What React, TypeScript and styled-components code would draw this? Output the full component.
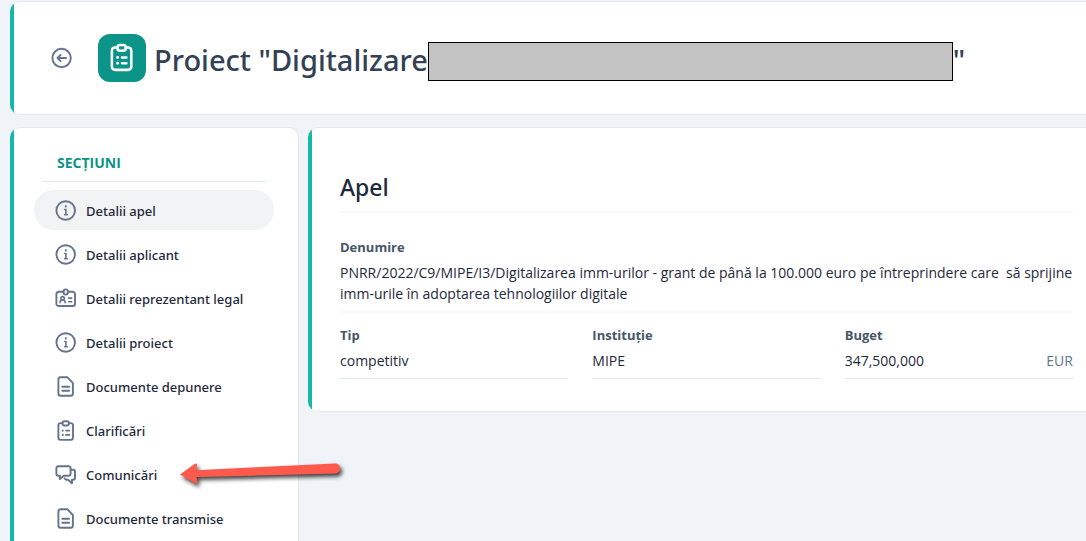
import React from "react";
import styled, { createGlobalStyle } from "styled-components";

const GlobalStyle = createGlobalStyle`
  *, *::before, *::after { box-sizing: border-box; }
  body {
    margin: 0;
    background: #f0f4f9;
    color: #1e293b;
    font-family: "Noto Sans", "Open Sans", sans-serif;
    font-size: 13px;
    font-weight: 500;
    line-height: 21px;
  }
  h1, h2, h3, p, dl, dt, dd, ul { margin: 0; padding: 0; }
`;

const Page = styled.div`
  display: flex;
  flex-direction: column;
  gap: 12px;
  min-height: 100vh;
  padding: 1px 0 0 10px;
`;

const Card = styled.section`
  border: 1px solid #e2e8f0;
  border-left: 0;
  border-right: 0;
  border-radius: 10px 0 0 10px;
  background: linear-gradient(to right, #14b8a6 4px, #ffffff 4px);
`;

const Header = styled(Card).attrs({ as: "header" })`
  display: flex;
  align-items: center;
  gap: 24px;
  padding: 32px 13px 32px 40px;
`;

const BackButton = styled.button`
  display: flex;
  padding: 0;
  border: 0;
  background: none;
  color: #64748b;
  cursor: pointer;
`;

const TitleGroup = styled.div`
  display: flex;
  align-items: center;
  gap: 8px;
`;

const Tile = styled.span`
  display: flex;
  align-items: center;
  justify-content: center;
  width: 48px;
  height: 48px;
  border-radius: 12px;
  background: #0d9488;
  color: #ffffff;
`;

const Title = styled.h1`
  display: flex;
  align-items: center;
  padding-top: 4px;
  color: #334155;
  font-size: 29px;
  font-weight: 500;
  line-height: 44px;
  white-space: nowrap;
`;

const Redacted = styled.span`
  width: 525px;
  height: 39px;
  margin-top: 2px;
  border: 1px solid #000000;
  background: #c3c3c3;
`;

const Columns = styled.div`
  display: flex;
  flex: 1;
  gap: 9px;
`;

const Sidebar = styled(Card).attrs({ as: "nav" })`
  position: relative;
  flex: 0 0 289px;
  padding: 23px 24px 0 24px;
  border-right: 1px solid #e2e8f0;
  border-bottom: 0;
  border-radius: 10px 10px 0 0;
`;

const SidebarHeading = styled.h2`
  margin: 0 8px 8px;
  padding: 0 15px 6px;
  border-bottom: 1px solid #e2e8f0;
  color: #0d9488;
  font-family: "Open Sans", "Noto Sans", sans-serif;
  font-size: 14px;
  font-weight: 700;
  line-height: 24px;
`;

const NavList = styled.ul`
  display: flex;
  flex-direction: column;
  gap: 4px;
  list-style: none;
`;

const NavLink = styled.a<{ $active?: boolean }>`
  display: flex;
  align-items: center;
  gap: 8px;
  height: 40px;
  padding: 2px 20px 0;
  border-radius: 20px;
  background: ${(p) => (p.$active ? "#f2f3f5" : "transparent")};
  color: #1e293b;
  text-decoration: none;
  white-space: nowrap;

  svg { color: #64748b; }
`;

const Arrow = styled.svg`
  position: absolute;
  top: 330px;
  left: 166px;
  z-index: 1;
  filter: drop-shadow(2px 3px 2px rgba(0, 0, 0, 0.75));
`;

const Main = styled(Card).attrs({ as: "main" })`
  flex: 1;
  align-self: flex-start;
  min-width: 0;
  padding: 43px 13px 32px 32px;
`;

const MainHeading = styled.h2`
  padding-bottom: 8px;
  margin-bottom: 23px;
  border-bottom: 2px solid #f8fafc;
  font-size: 23px;
  font-weight: 500;
  line-height: 32px;
`;

const Fields = styled.dl`
  display: grid;
  grid-template-columns: repeat(3, 1fr);
  gap: 11px 24px;
`;

const Field = styled.div<{ $wide?: boolean }>`
  grid-column: ${(p) => (p.$wide ? "1 / -1" : "auto")};
  padding-bottom: 7px;
  border-bottom: ${(p) => (p.$wide ? "2px solid #f8fafc" : "1px solid #e2e8f0")};
`;

const Label = styled.dt`
  margin-bottom: 4px;
  color: #475569;
  font-family: "Open Sans", "Noto Sans", sans-serif;
  font-weight: 700;
  line-height: 22px;
`;

const Value = styled.dd`
  display: flex;
  justify-content: space-between;
  color: #1e293b;
  font-family: "Open Sans", "Noto Sans", sans-serif;
  font-size: 14px;
`;

const Unit = styled.span`
  color: #64748b;
`;

const Icon = ({ children, size = 24 }: { children: React.ReactNode; size?: number }) => (
  <svg
    width={size}
    height={size}
    viewBox="0 0 24 24"
    fill="none"
    stroke="currentColor"
    strokeWidth="1.9"
    strokeLinecap="round"
    strokeLinejoin="round"
    aria-hidden="true"
  >
    {children}
  </svg>
);

const BackIcon = () => (
  <Icon>
    <circle cx="11.6" cy="12" r="9.2" />
    <path d="M16 12H7.6M10.6 8.9 7.5 12l3.1 3.1" />
  </Icon>
);

const InfoIcon = () => (
  <Icon>
    <circle cx="11.7" cy="11.5" r="9.3" />
    <path d="M10.600 10.500h1.300v5M10.600 15.700h2.800" strokeWidth="1.6" />
    <path d="M11.800 7.400h.01" strokeWidth="2.1" />
  </Icon>
);

const BadgeIcon = () => (
  <Icon>
    <path d="M9.500 4.800H4.700A2.300 2.300 0 0 0 2.400 7.100v9.600a2.300 2.300 0 0 0 2.300 2.300h14a2.300 2.300 0 0 0 2.300-2.300V7.100a2.300 2.300 0 0 0-2.300-2.300h-4.800" />
    <rect x="9.600" y="2.400" width="4.200" height="5.200" rx="2.100" />
    <circle cx="8.600" cy="11.300" r="1.700" strokeWidth="1.600" />
    <path d="M5.900 15.700c.2-1.800 1.300-2.700 2.700-2.700s2.500.9 2.700 2.700M14.700 11.100h3M14.700 14.700h3" strokeWidth="1.600" />
  </Icon>
);

const DocumentIcon = () => (
  <Icon>
    <path d="M6.700 2.200h6.600l5.600 6v10.300a2.300 2.300 0 0 1-2.300 2.300H6.700a2.300 2.300 0 0 1-2.300-2.300v-14a2.300 2.300 0 0 1 2.300-2.300Z" />
    <path d="M8.300 11.700h6.800M8.300 15.700h6.800" />
  </Icon>
);

const ClipboardIcon = ({ size }: { size?: number }) => (
  <Icon size={size}>
    <path d="M8.500 4.100H6.700a2.300 2.300 0 0 0-2.300 2.300v12.200a2.300 2.300 0 0 0 2.300 2.300h10a2.300 2.300 0 0 0 2.300-2.300V6.400a2.300 2.300 0 0 0-2.300-2.300h-1.800" />
    <rect x="8.500" y="2.300" width="6.400" height="4.200" rx="2" />
    <path d="M12 11.600h3.300M12 15.900h3.300" />
    <path d="M8.700 11.600h.01M8.700 15.900h.01" strokeWidth="2.2" />
  </Icon>
);

const ChatIcon = () => (
  <Icon>
    <path d="M4.400 3.200h10.200a2 2 0 0 1 2 2v5.600a2 2 0 0 1-2 2H9.800l-4 3.300v-3.300H4.400a2 2 0 0 1-2-2V5.200a2 2 0 0 1 2-2Z" />
    <path d="M16.700 6.800H19a2 2 0 0 1 2 2v5.900a2 2 0 0 1-2 2h-1v3.500l-4-3.500h-1.500a2 2 0 0 1-1.900-1.400" />
  </Icon>
);

const sections = [
  { label: "Detalii apel", icon: InfoIcon },
  { label: "Detalii aplicant", icon: InfoIcon },
  { label: "Detalii reprezentant legal", icon: BadgeIcon },
  { label: "Detalii proiect", icon: InfoIcon },
  { label: "Documente depunere", icon: DocumentIcon },
  { label: "Clarificări", icon: ClipboardIcon },
  { label: "Comunicări", icon: ChatIcon },
  { label: "Documente transmise", icon: DocumentIcon },
];

const callName =
  "PNRR/2022/C9/MIPE/I3/Digitalizarea imm-urilor - grant de până la 100.000 euro pe " +
  "întreprindere care\u00a0 să sprijine imm-urile în adoptarea tehnologiilor digitale";

export default function App() {
  return (
    <>
      <GlobalStyle />
      <Page>
        <Header>
          <BackButton type="button" aria-label="Înapoi">
            <BackIcon />
          </BackButton>
          <TitleGroup>
            <Tile>
              <ClipboardIcon size={32} />
            </Tile>
            <Title>
              Proiect "Digitalizare
              <Redacted />"
            </Title>
          </TitleGroup>
        </Header>
        <Columns>
          <Sidebar>
            <SidebarHeading>SECȚIUNI</SidebarHeading>
            <NavList>
              {sections.map(({ label, icon: SectionIcon }, index) => (
                <li key={label}>
                  <NavLink href="#" $active={index === 0}>
                    <SectionIcon />
                    {label}
                  </NavLink>
                </li>
              ))}
            </NavList>
            <Arrow width="172" height="34" viewBox="0 0 172 34" aria-hidden="true">
              <path
                d="M4 16.500 18.500 6q3-1.500 2.500 1.500l-.8 4.700L159 5.500a5 5 0 0 1 .5 10L20.500 19l1 4.500q.2 3-2.500 1.500Z"
                fill="#ff5a4b"
              />
            </Arrow>
          </Sidebar>
          <Main>
            <MainHeading>Apel</MainHeading>
            <Fields>
              <Field $wide>
                <Label>Denumire</Label>
                <Value>{callName}</Value>
              </Field>
              <Field>
                <Label>Tip</Label>
                <Value>competitiv</Value>
              </Field>
              <Field>
                <Label>Instituție</Label>
                <Value>MIPE</Value>
              </Field>
              <Field>
                <Label>Buget</Label>
                <Value>
                  347,500,000 <Unit>EUR</Unit>
                </Value>
              </Field>
            </Fields>
          </Main>
        </Columns>
      </Page>
    </>
  );
}
